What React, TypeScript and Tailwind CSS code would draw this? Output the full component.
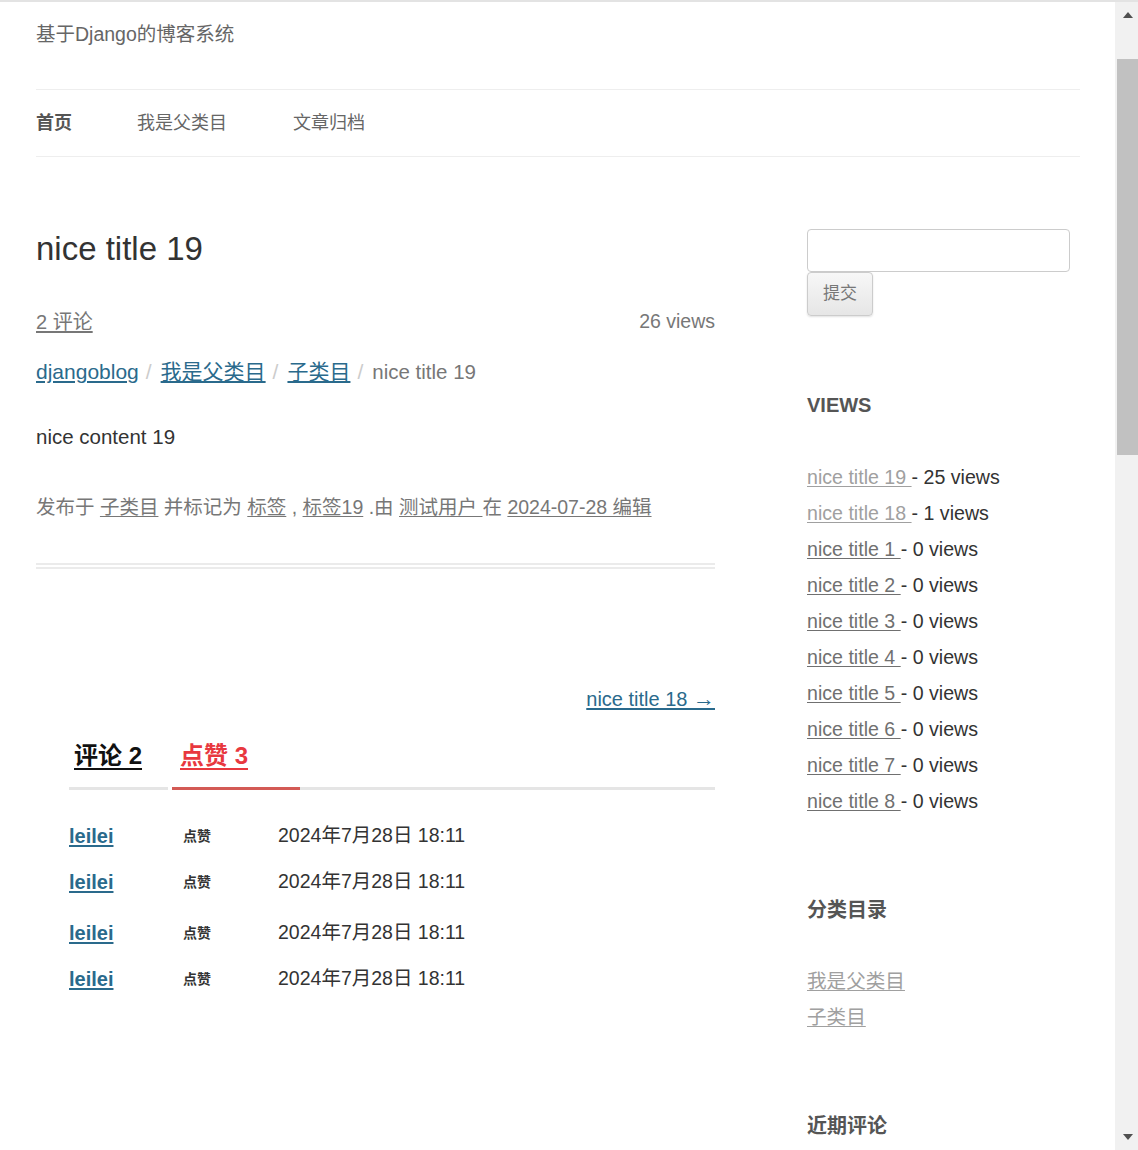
const font = {
  fontFamily: '"Liberation Sans", "Noto Sans CJK SC", sans-serif',
};

const viewList = [
  { title: "nice title 19", views: 25, visited: true },
  { title: "nice title 18", views: 1, visited: true },
  { title: "nice title 1", views: 0 },
  { title: "nice title 2", views: 0 },
  { title: "nice title 3", views: 0 },
  { title: "nice title 4", views: 0 },
  { title: "nice title 5", views: 0 },
  { title: "nice title 6", views: 0 },
  { title: "nice title 7", views: 0 },
  { title: "nice title 8", views: 0 },
];

const likes = [
  { gap: "mt-[31px]" },
  { gap: "mt-[16px]" },
  { gap: "mt-[21px]" },
  { gap: "mt-[16px]" },
];

function Scrollbar() {
  return (
    <div className="w-[23px] shrink-0 bg-[#f1f1f1] flex flex-col pl-[2px]">
      <div className="h-[26px] flex items-center justify-center">
        <svg width="10" height="6" viewBox="0 0 10 6">
          <polygon points="5,0 10,6 0,6" fill="#505050" />
        </svg>
      </div>
      <div className="mt-[31px] h-[396px] bg-[#c1c1c1]" />
      <div className="flex-1" />
      <div className="h-[26px] flex items-center justify-center">
        <svg width="10" height="6" viewBox="0 0 10 6">
          <polygon points="0,0 10,0 5,6" fill="#505050" />
        </svg>
      </div>
    </div>
  );
}

function Article() {
  return (
    <div className="w-[679px] shrink-0 flex flex-col">
      <h1 className="mt-[71px] h-[40px] flex items-center text-[33px] text-[#333] leading-none">
        nice title 19
      </h1>
      <div className="mt-[39px] h-[30px] flex items-center justify-between text-[20px] text-[#777]">
        <a className="underline underline-offset-2">2 评论</a>
        <span className="text-[19.5px]">26 views</span>
      </div>
      <div className="mt-[20px] h-[30px] flex items-center text-[21px]">
        <a className="text-[#2a6a8c] underline underline-offset-2">djangoblog</a>
        <span className="px-[7px] text-[#ccc]">/</span>
        <a className="ml-[2px] text-[#2a6a8c] underline underline-offset-2">我是父类目</a>
        <span className="px-[7px] text-[#ccc]">/</span>
        <a className="ml-[2px] text-[#2a6a8c] underline underline-offset-2">子类目</a>
        <span className="px-[7px] text-[#ccc]">/</span>
        <span className="ml-[2px] text-[20.5px] text-[#777]">nice title 19</span>
      </div>
      <p className="mt-[35px] h-[30px] flex items-center text-[20.5px] text-[#333]">
        nice content 19
      </p>
      <p className="mt-[41px] h-[30px] flex items-center text-[19.5px] text-[#777] whitespace-pre">
        {"发布于 "}
        <a className="underline underline-offset-2">子类目</a>
        {" 并标记为 "}
        <a className="underline underline-offset-2">标签</a>
        {" , "}
        <a className="underline underline-offset-2">标签19</a>
        {" .由 "}
        <a className="underline underline-offset-2">测试用户 </a>
        {"在 "}
        <a className="underline underline-offset-2">2024-07-28 编辑</a>
      </p>
      <div className="mt-[40px] h-[6px] border-t-2 border-b-2 border-[#ebebeb]" />
      <div className="mt-[114px] h-[30px] flex items-center justify-end text-[20px]">
        <a className="text-[#2a6a8c] underline underline-offset-2">
          nice title 18 <span className="text-[22px]">→</span>
        </a>
      </div>

      <div className="ml-[33px] mt-[28px] flex flex-col">
        <div className="flex items-end">
          <div className="w-[99px] pl-[5px] pb-[16px] border-b-[3px] border-[#e5e5e5]">
            <a className="h-[30px] flex items-center text-[24px] font-bold text-[#111] underline underline-offset-4">
              评论 2
            </a>
          </div>
          <div className="ml-[4px] w-[128px] pl-[8px] pb-[16px] border-b-[3px] border-[#d35a55]">
            <a className="h-[30px] flex items-center text-[24px] font-bold text-[#e8383f] underline underline-offset-4">
              点赞 3
            </a>
          </div>
          <div className="flex-1 border-b-[3px] border-[#e5e5e5]" />
        </div>
        {likes.map((l, i) => (
          <div key={i} className={`${l.gap} h-[30px] flex items-center`}>
            <a className="w-[114px] text-[20px] font-bold text-[#2a6a8c] underline underline-offset-2">
              leilei
            </a>
            <span className="w-[95px] text-[14px] font-bold text-[#333]">点赞</span>
            <span className="text-[19.5px] text-[#333]">2024年7月28日 18:11</span>
          </div>
        ))}
      </div>
    </div>
  );
}

function Sidebar() {
  return (
    <div className="ml-[92px] flex-1 flex flex-col">
      <input
        type="text"
        className="mt-[72px] w-[263px] h-[43px] rounded-[4px] border border-[#ccc] bg-white outline-none"
      />
      <button className="w-[66px] h-[44px] rounded-[4px] border border-[#ccc] bg-gradient-to-b from-[#f7f7f7] to-[#e6e6e6] shadow-[0_1px_2px_rgba(0,0,0,0.12)] text-[17px] text-[#777]">
        提交
      </button>

      <h3 className="mt-[74px] h-[30px] flex items-center text-[20px] font-bold text-[#555]">
        VIEWS
      </h3>
      <ul className="mt-[40px] flex flex-col">
        {viewList.map((v) => (
          <li key={v.title} className="h-[36px] flex items-center text-[19.6px] text-[#333] whitespace-pre">
            <a
              className={`underline underline-offset-2 ${v.visited ? "text-[#a0a0a0]" : "text-[#707070]"}`}
            >
              {v.title + " "}
            </a>
            {`- ${v.views} views`}
          </li>
        ))}
      </ul>

      <h3 className="mt-[75px] h-[30px] flex items-center text-[20px] font-bold text-[#555]">
        分类目录
      </h3>
      <ul className="mt-[39px] flex flex-col">
        <li className="h-[36px] flex items-center text-[19.6px]">
          <a className="text-[#a0a0a0] underline underline-offset-2">我是父类目</a>
        </li>
        <li className="h-[36px] flex items-center text-[19.6px]">
          <a className="text-[#a0a0a0] underline underline-offset-2">子类目</a>
        </li>
      </ul>

      <h3 className="mt-[75px] h-[30px] flex items-center text-[20px] font-bold text-[#555]">
        近期评论
      </h3>
    </div>
  );
}

export default function App() {
  return (
    <div
      className="w-[1138px] h-[1150px] overflow-hidden flex flex-col bg-white border-t-2 border-[#e3e3e3]"
      style={font}
    >
      <div className="flex-1 flex min-h-0">
        <div className="flex-1 min-w-0 overflow-hidden pl-[36px] pr-[35px]">
          <div className="h-[66px] flex items-center text-[19.5px] text-[#666]">
            基于Django的博客系统
          </div>
          <nav className="mt-[21px] h-[68px] border-t border-b border-[#eeeeee] flex items-center text-[18px] text-[#666]">
            <a className="w-[101px] font-bold text-[#555]">首页</a>
            <a className="w-[156px]">我是父类目</a>
            <a>文章归档</a>
          </nav>
          <div className="flex">
            <Article />
            <Sidebar />
          </div>
        </div>
        <Scrollbar />
      </div>
    </div>
  );
}
